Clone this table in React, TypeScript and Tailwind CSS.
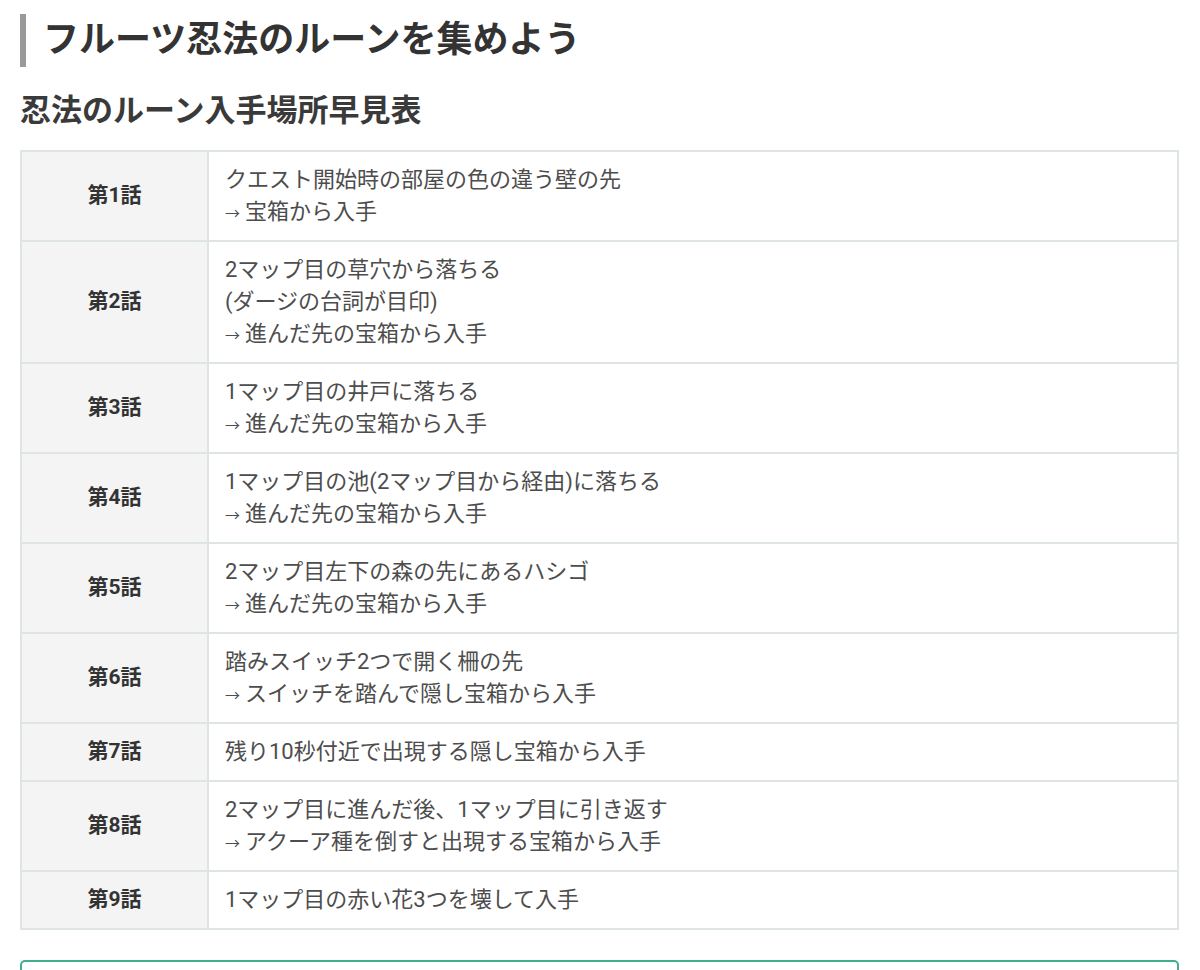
const rows: { ep: string; lines: string[] }[] = [
  { ep: "第1話", lines: ["クエスト開始時の部屋の色の違う壁の先", "→宝箱から入手"] },
  { ep: "第2話", lines: ["2マップ目の草穴から落ちる", "(ダージの台詞が目印)", "→進んだ先の宝箱から入手"] },
  { ep: "第3話", lines: ["1マップ目の井戸に落ちる", "→進んだ先の宝箱から入手"] },
  { ep: "第4話", lines: ["1マップ目の池(2マップ目から経由)に落ちる", "→進んだ先の宝箱から入手"] },
  { ep: "第5話", lines: ["2マップ目左下の森の先にあるハシゴ", "→進んだ先の宝箱から入手"] },
  { ep: "第6話", lines: ["踏みスイッチ2つで開く柵の先", "→スイッチを踏んで隠し宝箱から入手"] },
  { ep: "第7話", lines: ["残り10秒付近で出現する隠し宝箱から入手"] },
  { ep: "第8話", lines: ["2マップ目に進んだ後、1マップ目に引き返す", "→アクーア種を倒すと出現する宝箱から入手"] },
  { ep: "第9話", lines: ["1マップ目の赤い花3つを壊して入手"] },
];

function Line({ text }: { text: string }) {
  if (text.startsWith("→")) {
    return (
      <div>
        <span className="text-[15px] leading-none mr-[5px]">→</span>
        {text.slice(1)}
      </div>
    );
  }
  return <div>{text}</div>;
}

export default function App() {
  return (
    <div
      className="min-h-screen bg-white pl-[20px] pr-[21px] pt-[14px] overflow-hidden"
      style={{ fontFamily: 'Roboto, "Noto Sans CJK JP", sans-serif' }}
    >
      <h2 className="border-l-[6px] border-[#9a9a9a] pl-[17px] text-[36px] leading-[53px] font-bold text-[#333]">
        フルーツ忍法のルーンを集めよう
      </h2>
      <h3 className="mt-[22px] text-[31px] leading-[44px] font-bold text-[#3a3a3a]">
        忍法のルーン入手場所早見表
      </h3>
      <table className="mt-[17px] w-full border-collapse border-2 border-[#dfe5e5]">
        <tbody>
          {rows.map((r) => (
            <tr key={r.ep}>
              <th className="w-[187px] border-2 border-[#dfe5e5] bg-[#f4f4f4] text-[21px] font-bold text-[#333] align-middle">
                {r.ep}
              </th>
              <td className="border-2 border-[#dfe5e5] px-[16px] py-[12px] text-[22px] leading-[32px] text-[#4d4d4d]">
                {r.lines.map((l, i) => (
                  <Line key={i} text={l} />
                ))}
              </td>
            </tr>
          ))}
        </tbody>
      </table>
      <div className="mt-[30px] h-[80px] rounded-[5px] border-2 border-[#3faf8f]" />
    </div>
  );
}
